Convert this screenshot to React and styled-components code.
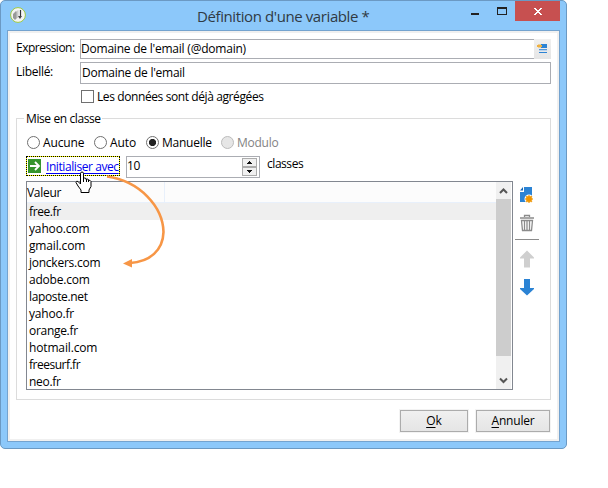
import React from "react";
import styled, { createGlobalStyle, css } from "styled-components";

const Global = createGlobalStyle`
  * { box-sizing: border-box; }
  body { margin: 0; background: #fff; font: 12px/16px "Open Sans", "Noto Sans", sans-serif; color: #000; }
`;
const Window = styled.div`
  position: relative; width: 567px; height: 449px; border-radius: 5px;
  background: #8cc8fa; padding: 0 7px 7px 6px; border: 1px solid #6b99c3; overflow: hidden;
`;
const TitleBar = styled.header`display: flex; height: 29px; padding-left: 3px; margin-right: -1px;`;
const Logo = styled.svg`margin-top: 5px; flex: none;`;
const Title = styled.h1`
  margin: 0 auto 0 171px; padding-top: 4px; font-size: 15px; line-height: 22px; font-weight: 400;
  letter-spacing: ${(p) => p.$ls}px; color: #303a44; white-space: nowrap;
`;
const WindowControls = styled.svg`flex: none;`;
const Client = styled.main`
  width: 553px; height: 412px; background: #fff; border: 1px solid #74a3cf;
  box-shadow: inset 0 0 0 2px #f0f0f0; padding: 8px 8px 0 8px;
`;
const Text = styled.span`white-space: nowrap; letter-spacing: ${(p) => p.$ls || 0}px;`;
const Field = styled.div`display: flex; height: ${(p) => p.$h}px; margin-bottom: ${(p) => p.$gap}px;`;
const FieldLabel = styled(Text)`width: 64px; padding-top: ${(p) => p.$top}px;`;
const Input = styled.div`
  flex: 1; border: 1px solid #abadb3; padding-left: ${(p) => p.$pad}px;
  line-height: ${(p) => p.$line}px; ${(p) => p.$open && css`border-right: 0;`}
`;
const EditButton = styled.div`width: 17px; background: linear-gradient(#f0f0f0, #e5e5e5); svg { display: block; }`;
const CheckRow = styled.div`display: flex; gap: 3px; padding-left: 65px; height: 22px; align-items: flex-start;`;
const CheckBox = styled.i`width: 13px; height: 13px; border: 1px solid #707070; margin-top: 1px;`;
const Group = styled.section`
  margin-top: 7px; width: 535px; height: 282px; border: 1px solid #dcdcdc; padding: 0 0 0 9px;
`;
const Legend = styled.div`
  width: 78px; height: 16px; margin: -8px 0 0 -2px; padding-left: 2px; background: #fff;
`;
const RadioRow = styled.div`display: flex; height: 22px; margin-top: 7px; padding-left: 1px;`;
const Option = styled.div`
  display: flex; gap: 3px; width: ${(p) => p.$w}px; height: 18px; padding-top: 1px; color: ${(p) => (p.$disabled ? "#838383" : "#000")};
`;
const Circle = styled.i`
  flex: none; width: 13px; height: 13px; margin-top: 1px; border-radius: 50%;
  border: 1px solid ${(p) => (p.$disabled ? "#bcbcbc" : "#707070")};
  background: ${(p) => (p.$disabled ? "#e6e6e6" : p.$on ? "radial-gradient(circle, #222 0 3.2px, #fff 4px)" : "#fff")};
`;
const InitRow = styled.div`display: flex; height: 25px;`;
const InitLink = styled.div`
  display: flex; width: 94px; height: 20px; border: 1px dotted #000;
  background: linear-gradient(#fff, #fff) padding-box, linear-gradient(#ff0, #ff0) border-box;
  padding: 1px 0 0 1px;
  color: #0000f0; line-height: 17px; svg { flex: none; margin: 1px 5px 0 0; }
`;
const Underlined = styled(Text)`text-decoration: underline; text-underline-offset: 2px;`;
const Spinner = styled.div`
  display: flex; justify-content: space-between; width: 134px; height: 22px; margin: 0 7px 0 6px;
  border: 1px solid #abadb3; padding-left: 0; line-height: 18px;
`;
const ListArea = styled.div`display: flex;`;
const ListBox = styled.div`display: flex; width: 487px; height: 209px; border: 1px solid #828790;`;
const ListBody = styled.div`width: 469px;`;
const ListHead = styled.div`
  height: 21px; background: #fcfcfc; border-bottom: 1px solid #e8f0fb; line-height: 22px; padding-left: 0;
`;
const HeadCell = styled.div`width: 138px; height: 20px; border-right: 1px solid #e8f0fb;`;
const Item = styled.div`
  height: ${(p) => (p.$selected ? 17 : 17)}px; line-height: ${(p) => (p.$selected ? 17 : 17)}px;
  padding-left: 2px; background: ${(p) => (p.$selected ? "#efefef" : "transparent")};
`;
const ScrollBar = styled.div`width: 15px; margin-left: auto; margin-right: 1px; background: #f0f0f0;`;
const Thumb = styled.div`height: 157px; background: #cdcdcd;`;
const Chevron = styled.svg`display: block;`;
const Tools = styled.svg`margin-left: 1px;`;
const Footer = styled.footer`display: flex; justify-content: flex-end; gap: 8px; padding: 10px 1px 0 0;`;
const Button = styled.div`
  width: ${(p) => p.$w}px; height: 22px; border: 1px solid #acacac; background: linear-gradient(#f0f0f0, #e5e5e5);
  box-shadow: 0 0 0 1px #f3f3f3; text-align: center; line-height: 20px;
  letter-spacing: ${(p) => p.$ls || 0}px;
  u { text-underline-offset: 2px; }
`;
const Overlay = styled.svg`position: absolute; left: 0; top: 0; pointer-events: none;`;

const domains = [
  ["free.fr", -0.4], ["yahoo.com", -0.15], ["gmail.com", -0.15], ["jonckers.com", -0.25], ["adobe.com", -0.22], ["laposte.net", -0.36],
  ["yahoo.fr", -0.2], ["orange.fr", -0.3], ["hotmail.com", -0.15], ["freesurf.fr", -0.5], ["neo.fr", -0.3],
];
const options = [
  { label: "Aucune", w: 67, ls: -0.15 }, { label: "Auto", w: 52, ls: -0.1 },
  { label: "Manuelle", w: 75, on: true, ls: -0.25 }, { label: "Modulo", w: 80, disabled: true, ls: -0.25 },
];

export default function App() {
  return (
    <>
      <Global />
      <Window>
        <TitleBar>
          <Logo width="16" height="18" viewBox="0 0 16 18">
            <circle cx="8" cy="9" r="7.4" fill="#f4f4f4" stroke="#9dc93f" />
            <path d="M3 8l3-3 1 1v6l-2 2-2-2z" fill="#999" />
            <path d="M6.500 5l2-1v8h-2z" fill="#ccc" />
            <path d="M10.500 4v7" fill="none" stroke="#333" strokeWidth="1.200" />
            <path d="M8 10h4l-2 3z" fill="#444" />
          </Logo>
          <Title $ls={-0.4}>Définition d'une variable *</Title>
          <WindowControls width="89" height="21" shapeRendering="crispEdges">
            <path d="M0 12h8v2H0z" fill="#222" />
            <path d="M26 6h10v8H26zM27 8v5h8V8z" fill="#222" fillRule="evenodd" />
            <path d="M44 0h45v20H44z" fill="#c75050" />
            <path d="M63 7h2v1h1v1h2V8h1V7h2v1h-1v1h-1v1h-1v1h1v1h1v1h1v1h-2v-1h-1v-1h-2v1h-1v1h-2v-1h1v-1h1v-1h1v-1h-1V9h-1V8h-1z" fill="#fff" />
          </WindowControls>
        </TitleBar>
        <Client>
          <Field $h={20} $gap={3}>
            <FieldLabel $top={1} $ls={-0.5}>Expression:</FieldLabel>
            <Input $pad={0} $line={17} $open><Text $ls={-0.22}>Domaine de l'email (@domain)</Text></Input>
            <EditButton>
              <svg width="17" height="20" shapeRendering="crispEdges">
                <path d="M7 5h6v4H7zM5 13h8v1H5z" fill="#2b83d4" />
                <path d="M5 10h8v1H5z" fill="#5298da" /><path d="M5 11h8v1H5z" fill="#b9d3ed" />
                <path d="M3 6h5v2H3z" fill="#eeb040" /><path d="M4 5h3v1H4zM4 8h3v1H4z" fill="#edcd94" />
              </svg>
            </EditButton>
          </Field>
          <Field $h={22} $gap={5}>
            <FieldLabel $top={2} $ls={-0.3}>Libellé:</FieldLabel>
            <Input $pad={1} $line={19}><Text $ls={-0.25}>Domaine de l'email</Text></Input>
          </Field>
          <CheckRow><CheckBox /><Text $ls={-0.4}>Les données sont déjà agrégées</Text></CheckRow>
          <Group>
            <Legend><Text $ls={-0.4}>Mise en classe</Text></Legend>
            <RadioRow>
              {options.map((o) => (
                <Option key={o.label} $w={o.w} $disabled={o.disabled}>
                  <Circle $on={o.on} $disabled={o.disabled} /><Text $ls={o.ls}>{o.label}</Text>
                </Option>
              ))}
            </RadioRow>
            <InitRow>
              <InitLink>
                <svg width="13" height="14">
                  <rect width="13" height="14" fill="#35942c" />
                  <path d="M2 7h8M7 3l4 4-4 4" fill="none" stroke="#fff" strokeWidth="1.8" />
                </svg>
                <Underlined $ls={-0.42}>Initialiser avec</Underlined>
              </InitLink>
              <Spinner>
                <Text $ls={-0.3}>10</Text>
                <svg width="17" height="20" shapeRendering="crispEdges">
                  <path d="M.5 1.500h14v8H.5zM.5 10.500h14v8H.5z" fill="#f0f0f0" stroke="#acacac" />
                  <path d="M7 4h1v1h1v1h1v1H5V6h1V5h1zM5 13h5v1H9v1H8v1H7v-1H6v-1H5z" fill="#111" />
                </svg>
              </Spinner>
              <Text $ls={-0.45}>classes</Text>
            </InitRow>
            <ListArea>
              <ListBox>
                <ListBody>
                  <ListHead><HeadCell><Text $ls={-0.3}>Valeur</Text></HeadCell></ListHead>
                  {domains.map(([name, ls], i) => (
                    <Item key={name} $selected={i === 0}><Text $ls={ls}>{name}</Text></Item>
                  ))}
                </ListBody>
                <ScrollBar>
                  <Chevron width="15" height="17"><path d="M4 11l3.500-3.500L11 11" fill="none" stroke="#555" strokeWidth="2" /></Chevron>
                  <Thumb />
                  <Chevron width="15" height="33"><path d="M4 22.500L7.500 26l3.500-3.500" fill="none" stroke="#555" strokeWidth="2" /></Chevron>
                </ScrollBar>
              </ListBox>
              <Tools width="26" height="130" viewBox="514 181 26 130">
                <path d="M524 187h8v15h-12v-10h4z" fill="#2b83d4" />
                <path d="M520 190.500l3-3.500v3.500z" fill="#1767b4" />
                <circle cx="529" cy="199" r="4.500" fill="#fff" />
                <path d="M529 195l1 1.500 2-.5-.5 2 1.500 1-1.500 1 .5 2-2-.5-1 1.500-1-1.500-2 .5.5-2-1.500-1 1.500-1-.5-2 2 .5z" fill="#ef9500" stroke="#ef9500" strokeWidth=".4" />
                <path d="M520 218h14M524.500 217v-1.500h5v1.500M521.500 220.500h11l-1 10h-9zM524.500 221v9M527 221v9M529.500 221v9" fill="none" stroke="#8b8b8b" strokeWidth="1.300" />
                <path d="M515 239h24v1h-24z" fill="#8c8c8c" />
                <path d="M527 250.500l7 7v1h-4v9h-6v-9h-4v-1z" fill="#cfcfcf" />
                <path d="M524 279h6v9h4v1l-7 6.500-7-6.500v-1h4z" fill="#2b83d4" />
              </Tools>
            </ListArea>
          </Group>
          <Footer>
            <Button $w={68}><u>O</u>k</Button>
            <Button $w={74} $ls={-0.2}><u>A</u>nnuler</Button>
          </Footer>
        </Client>
        <Overlay width="200" height="280" viewBox="1 1 200 280">
          <path d="M107 176.500C140 181 163 207 163.500 232C163 250 150 262 130 263" fill="none" stroke="#f79646" strokeWidth="2.600" />
          <path d="M123 263.500l9-4.500v8.500z" fill="#f79646" />
          <path d="M80.500 184V173.500q0-1.500 1.500-1.500t1.500 1.500v5q1-1 2.500 0v1q1-1 2.500 0v1q1.500-1 2.500 1v5l-2 3.500v2.500h-8v-2.500l-3-4-2-3.500q.5-2 2-1z" fill="#fff" stroke="#000" />
          <path d="M83.500 178v4M86.500 179v3M88.500 180v2" stroke="#000" />
        </Overlay>
      </Window>
    </>
  );
}
